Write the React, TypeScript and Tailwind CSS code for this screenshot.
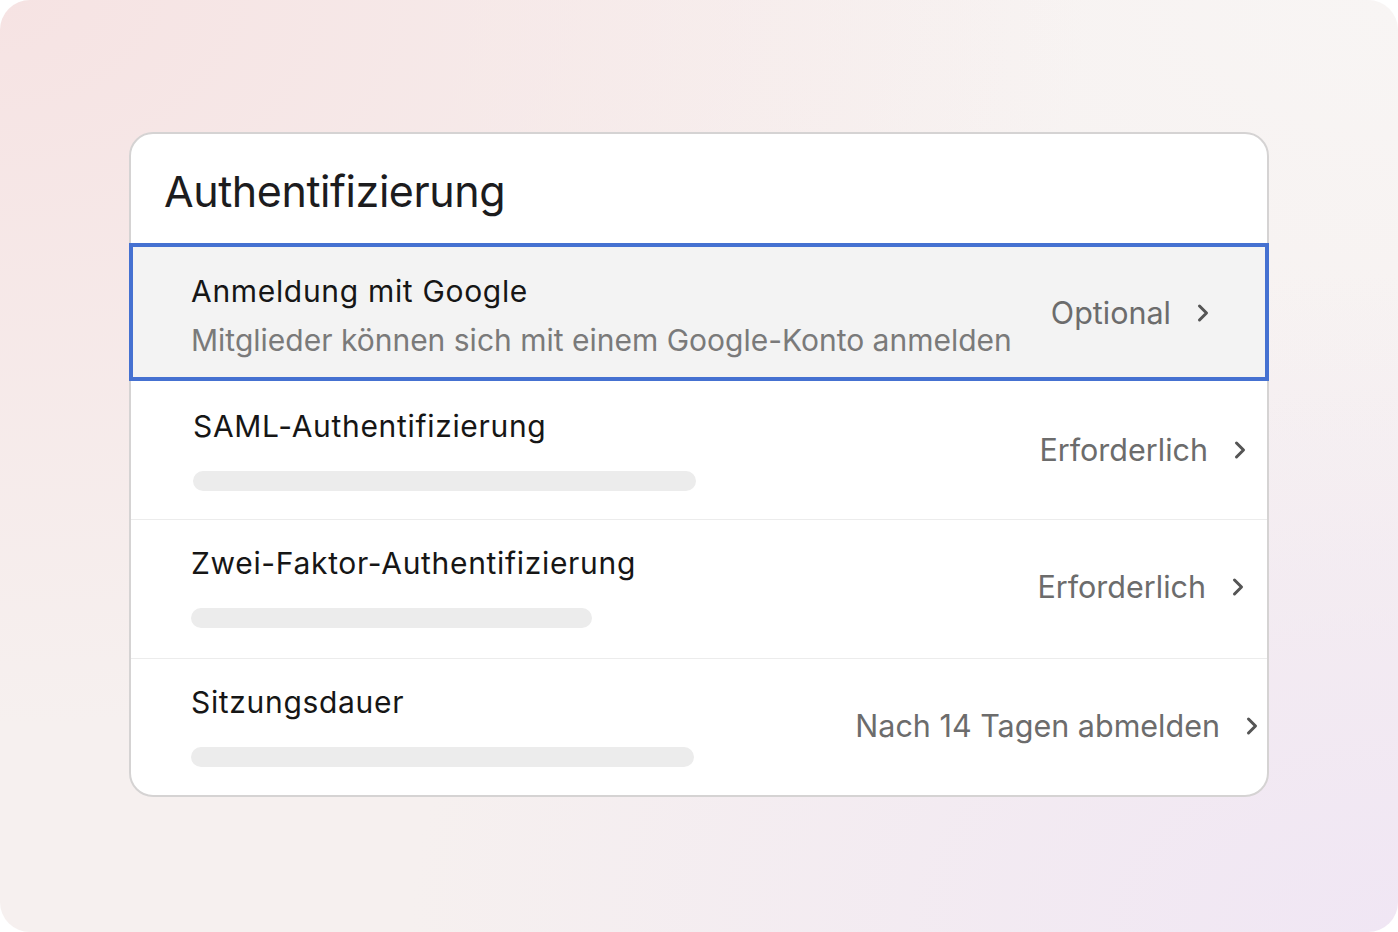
import { ChevronRight } from "lucide-react";

const font = { fontFamily: "Inter, 'Noto Sans', sans-serif" };

const Bar = ({ width }: { width: string }) => (
	<div className={`mt-[27px] h-[20px] rounded-full bg-[#ececec] ${width}`} />
);

const Right = ({ label, pr }: { label: string; pr: string }) => (
	<div className={`flex items-center gap-[18px] ${pr}`}>
		<span className="text-[30.5px] leading-[36px] text-[#6c6c6c]">{label}</span>
		<ChevronRight size={28} strokeWidth={2.6} className="text-[#555]" />
	</div>
);

const Title = ({ children }: { children: string }) => (
	<h3 className="text-[30px] leading-[36px] font-normal tracking-[0.68px] text-[#161616]">
		{children}
	</h3>
);

export default function App() {
	return (
		<div className="h-[932px] w-[1398px] bg-white" style={font}>
			<div className="h-full w-full overflow-hidden rounded-[30px] bg-[#f6f0ef] bg-[radial-gradient(ellipse_at_0%_0%,#f6e3e3_0%,rgba(246,227,227,0)_55%),radial-gradient(ellipse_at_100%_100%,#f0e6f4_0%,rgba(240,230,244,0)_50%),radial-gradient(ellipse_at_100%_0%,#f8f5f4_0%,rgba(248,245,244,0)_50%)] pt-[132px] pl-[129px]">
				<div className="w-[1140px] rounded-[24px] border-2 border-[#d5d3d3] bg-white">
					<div className="pt-[31px] pb-[26px] pl-[33px]">
						<h1 className="text-[43px] leading-[52px] font-normal tracking-[-0.01em] text-[#1c1c1e]">
							Authentifizierung
						</h1>
					</div>

					<div className="-mx-[2px] flex items-center justify-between border-4 border-[#4571d1] bg-[#f3f3f3] pt-[26px] pb-[19px] pl-[58px]">
						<div>
							<Title>Anmeldung mit Google</Title>
							<p className="mt-[13px] text-[30px] leading-[36px] text-[#7a7a7a]">
								Mitglieder können sich mit einem Google-Konto anmelden
							</p>
						</div>
						<div className="pb-[6px]">
							<Right label="Optional" pr="pr-[48px]" />
						</div>
					</div>

					<div className="flex items-center justify-between border-b border-[#ececec] pt-[27px] pb-[28px] pl-[62px]">
						<div>
							<Title>SAML-Authentifizierung</Title>
							<Bar width="w-[503px]" />
						</div>
						<Right label="Erforderlich" pr="pr-[13px]" />
					</div>

					<div className="flex items-center justify-between border-b border-[#ececec] pt-[25px] pb-[30px] pl-[60px]">
						<div>
							<Title>Zwei-Faktor-Authentifizierung</Title>
							<Bar width="w-[401px]" />
						</div>
						<Right label="Erforderlich" pr="pr-[15px]" />
					</div>

					<div className="flex items-center justify-between pt-[25px] pb-[28px] pl-[60px]">
						<div>
							<Title>Sitzungsdauer</Title>
							<Bar width="w-[503px]" />
						</div>
						<Right label="Nach 14 Tagen abmelden" pr="pr-[1px]" />
					</div>
				</div>
			</div>
		</div>
	);
}
